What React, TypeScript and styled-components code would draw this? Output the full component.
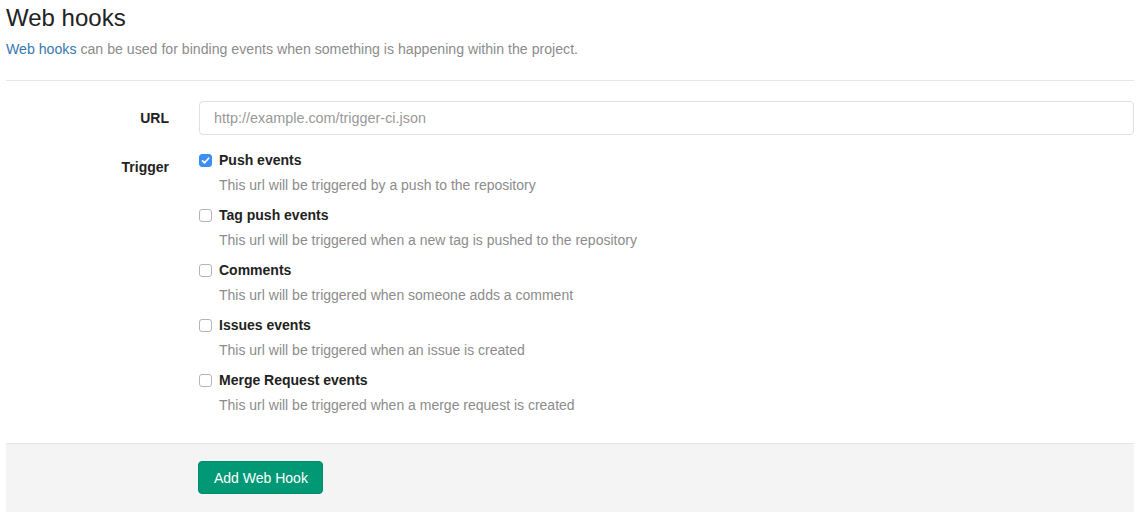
import React from "react";
import styled, { createGlobalStyle } from "styled-components";

const Global = createGlobalStyle`
  html, body { margin: 0; padding: 0; background: #fff; }
  body { font-family: "Liberation Sans", Arial, sans-serif; font-size: 14px; color: #333; }
  * { box-sizing: border-box; }
`;

const Page = styled.div`
  padding: 0 6px;
  width: 1140px;
`;

const Title = styled.h3`
  margin: 5px 0 0;
  font-size: 24px;
  line-height: 26px;
  font-weight: 400;
  color: #222;
`;

const Lead = styled.p`
  margin: 9px 0 0;
  font-size: 14.15px;
  line-height: 18px;
  color: #8c8c8c;
`;

const Link = styled.a`
  color: #3777b0;
  text-decoration: none;
`;

const Divider = styled.hr`
  margin: 22px 0 0;
  border: 0;
  border-top: 1px solid #e5e5e5;
`;

const Form = styled.form`
  display: flex;
  flex-direction: column;
  padding-top: 20px;
`;

const Row = styled.div<{ $gap?: number }>`
  display: grid;
  grid-template-columns: 163px 1fr;
  column-gap: 30px;
  margin-bottom: ${(p) => p.$gap ?? 0}px;
`;

const Label = styled.label<{ $pad?: number }>`
  text-align: right;
  font-weight: 700;
  font-size: 14px;
  line-height: 18px;
  color: #222;
  padding-top: ${(p) => p.$pad ?? 0}px;
`;

const Input = styled.input`
  height: 34px;
  width: 100%;
  border: 1px solid #e0e0e0;
  border-radius: 4px;
  padding: 0 14px;
  font-family: "Liberation Sans", Arial, sans-serif;
  font-size: 14.4px;
  color: #333;
  outline: none;
  &::placeholder { color: #999; }
`;

const Options = styled.div`
  display: flex;
  flex-direction: column;
  gap: 12px;
`;

const Option = styled.div`
  display: flex;
  flex-direction: column;
  gap: 7px;
`;

const OptionHead = styled.div`
  display: flex;
  align-items: center;
  gap: 7px;
  font-weight: 700;
  font-size: 14px;
  line-height: 18px;
  color: #222;
`;

const Box = styled.span<{ $checked?: boolean }>`
  width: 13px;
  height: 13px;
  border-radius: 3px;
  display: inline-flex;
  align-items: center;
  justify-content: center;
  flex: none;
  background: ${(p) => (p.$checked ? "#3b8ff0" : "#fff")};
  border: 1px solid ${(p) => (p.$checked ? "#3b8ff0" : "#b4b4b4")};
`;

const Help = styled.div`
  padding-left: 20px;
  font-size: 14px;
  line-height: 18px;
  color: #8c8c8c;
`;

const Footer = styled.div`
  margin-top: 29px;
  background: #f4f4f4;
  border-top: 1px solid #e5e5e5;
  padding: 17px 0 18px 192px;
`;

const Button = styled.button`
  height: 33px;
  padding: 0 14px 0 15px;
  border: 1px solid #018a6b;
  border-radius: 4px;
  background: #019875;
  color: #fff;
  font-family: "Liberation Sans", Arial, sans-serif;
  font-size: 14px;
  line-height: 18px;
`;

const items = [
  { title: "Push events", help: "This url will be triggered by a push to the repository", checked: true },
  { title: "Tag push events", help: "This url will be triggered when a new tag is pushed to the repository" },
  { title: "Comments", help: "This url will be triggered when someone adds a comment" },
  { title: "Issues events", help: "This url will be triggered when an issue is created" },
  { title: "Merge Request events", help: "This url will be triggered when a merge request is created" },
];

function Check({ checked }: { checked?: boolean }) {
  return (
    <Box $checked={checked}>
      {checked && (
        <svg width="9" height="9" viewBox="0 0 9 9">
          <path d="M1.5 4.8 L3.6 6.8 L7.6 2.2" fill="none" stroke="#fff" strokeWidth="1.7" strokeLinecap="round" strokeLinejoin="round" />
        </svg>
      )}
    </Box>
  );
}

export default function App() {
  return (
    <Page>
      <Global />
      <Title>Web hooks</Title>
      <Lead>
        <Link href="#">Web hooks</Link> can be used for binding events when something is happening within the project.
      </Lead>
      <Divider />
      <Form onSubmit={(e) => e.preventDefault()}>
        <Row $gap={16}>
          <Label $pad={8}>URL</Label>
          <Input placeholder="http://example.com/trigger-ci.json" />
        </Row>
        <Row>
          <Label $pad={7}>Trigger</Label>
          <Options>
            {items.map((it) => (
              <Option key={it.title}>
                <OptionHead>
                  <Check checked={it.checked} />
                  {it.title}
                </OptionHead>
                <Help>{it.help}</Help>
              </Option>
            ))}
          </Options>
        </Row>
        <Footer>
          <Button type="submit">Add Web Hook</Button>
        </Footer>
      </Form>
    </Page>
  );
}
